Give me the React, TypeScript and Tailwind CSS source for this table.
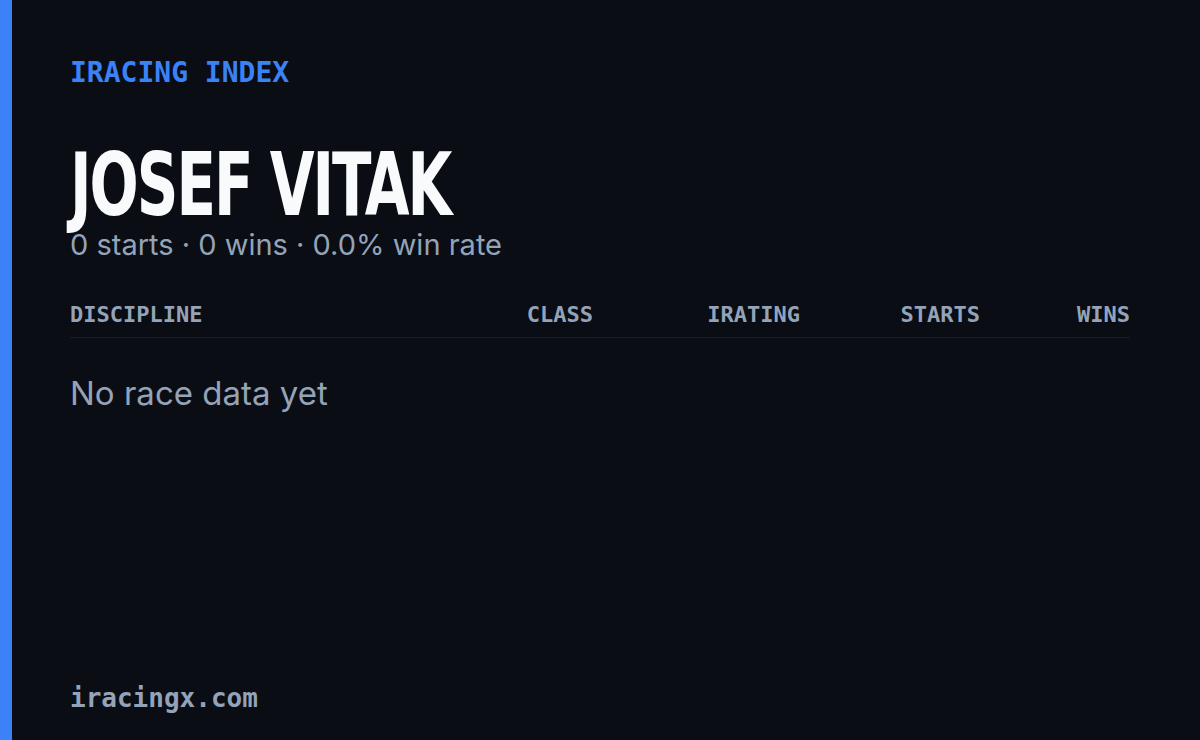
const mono = { fontFamily: '"DejaVu Sans Mono", "Liberation Mono", monospace' }

const columns = ['CLASS', 'IRATING', 'STARTS', 'WINS']

export default function App() {
  return (
    <div className="flex h-[740px] w-[1200px] bg-[#0a0d14]">
      <div className="w-3 shrink-0 bg-[#3b82f6]" />
      <div className="flex flex-1 flex-col pl-[58px] pr-[70px] pt-[54px] pb-[26px]">
        <div className="text-[28px] font-bold leading-[38px] text-[#3b82f6]" style={mono}>
          IRACING INDEX
        </div>

        <h1
          className="mt-[50px] origin-left scale-x-[0.73] text-[88px] font-bold leading-[86px] tracking-[-0.03em] text-[#f8fafc]"
          style={{ fontFamily: '"DejaVu Sans Condensed", "Liberation Sans Narrow", sans-serif' }}
        >
          JOSEF VITAK
        </h1>
        <p className="mt-[2px] text-[29px] leading-[30px] text-[#94a3b8] font-['Inter',sans-serif]">
          0 starts · 0 wins · 0.0% win rate
        </p>

        <div
          className="mt-[40px] grid grid-cols-[1fr_200px_207px_180px_150px] border-b border-[#1a1e29] pb-[7px] text-[22px] font-bold leading-[30px] text-[#94a3b8]"
          style={mono}
        >
          <span>DISCIPLINE</span>
          {columns.map((c) => (
            <span key={c} className="text-right">
              {c}
            </span>
          ))}
        </div>

        <p className="mt-[35px] text-[33px] leading-[40px] text-[#94a3b8] font-['Inter',sans-serif]">
          No race data yet
        </p>

        <div className="mt-auto text-[26px] font-bold leading-[32px] text-[#94a3b8]" style={mono}>
          iracingx.com
        </div>
      </div>
    </div>
  )
}
